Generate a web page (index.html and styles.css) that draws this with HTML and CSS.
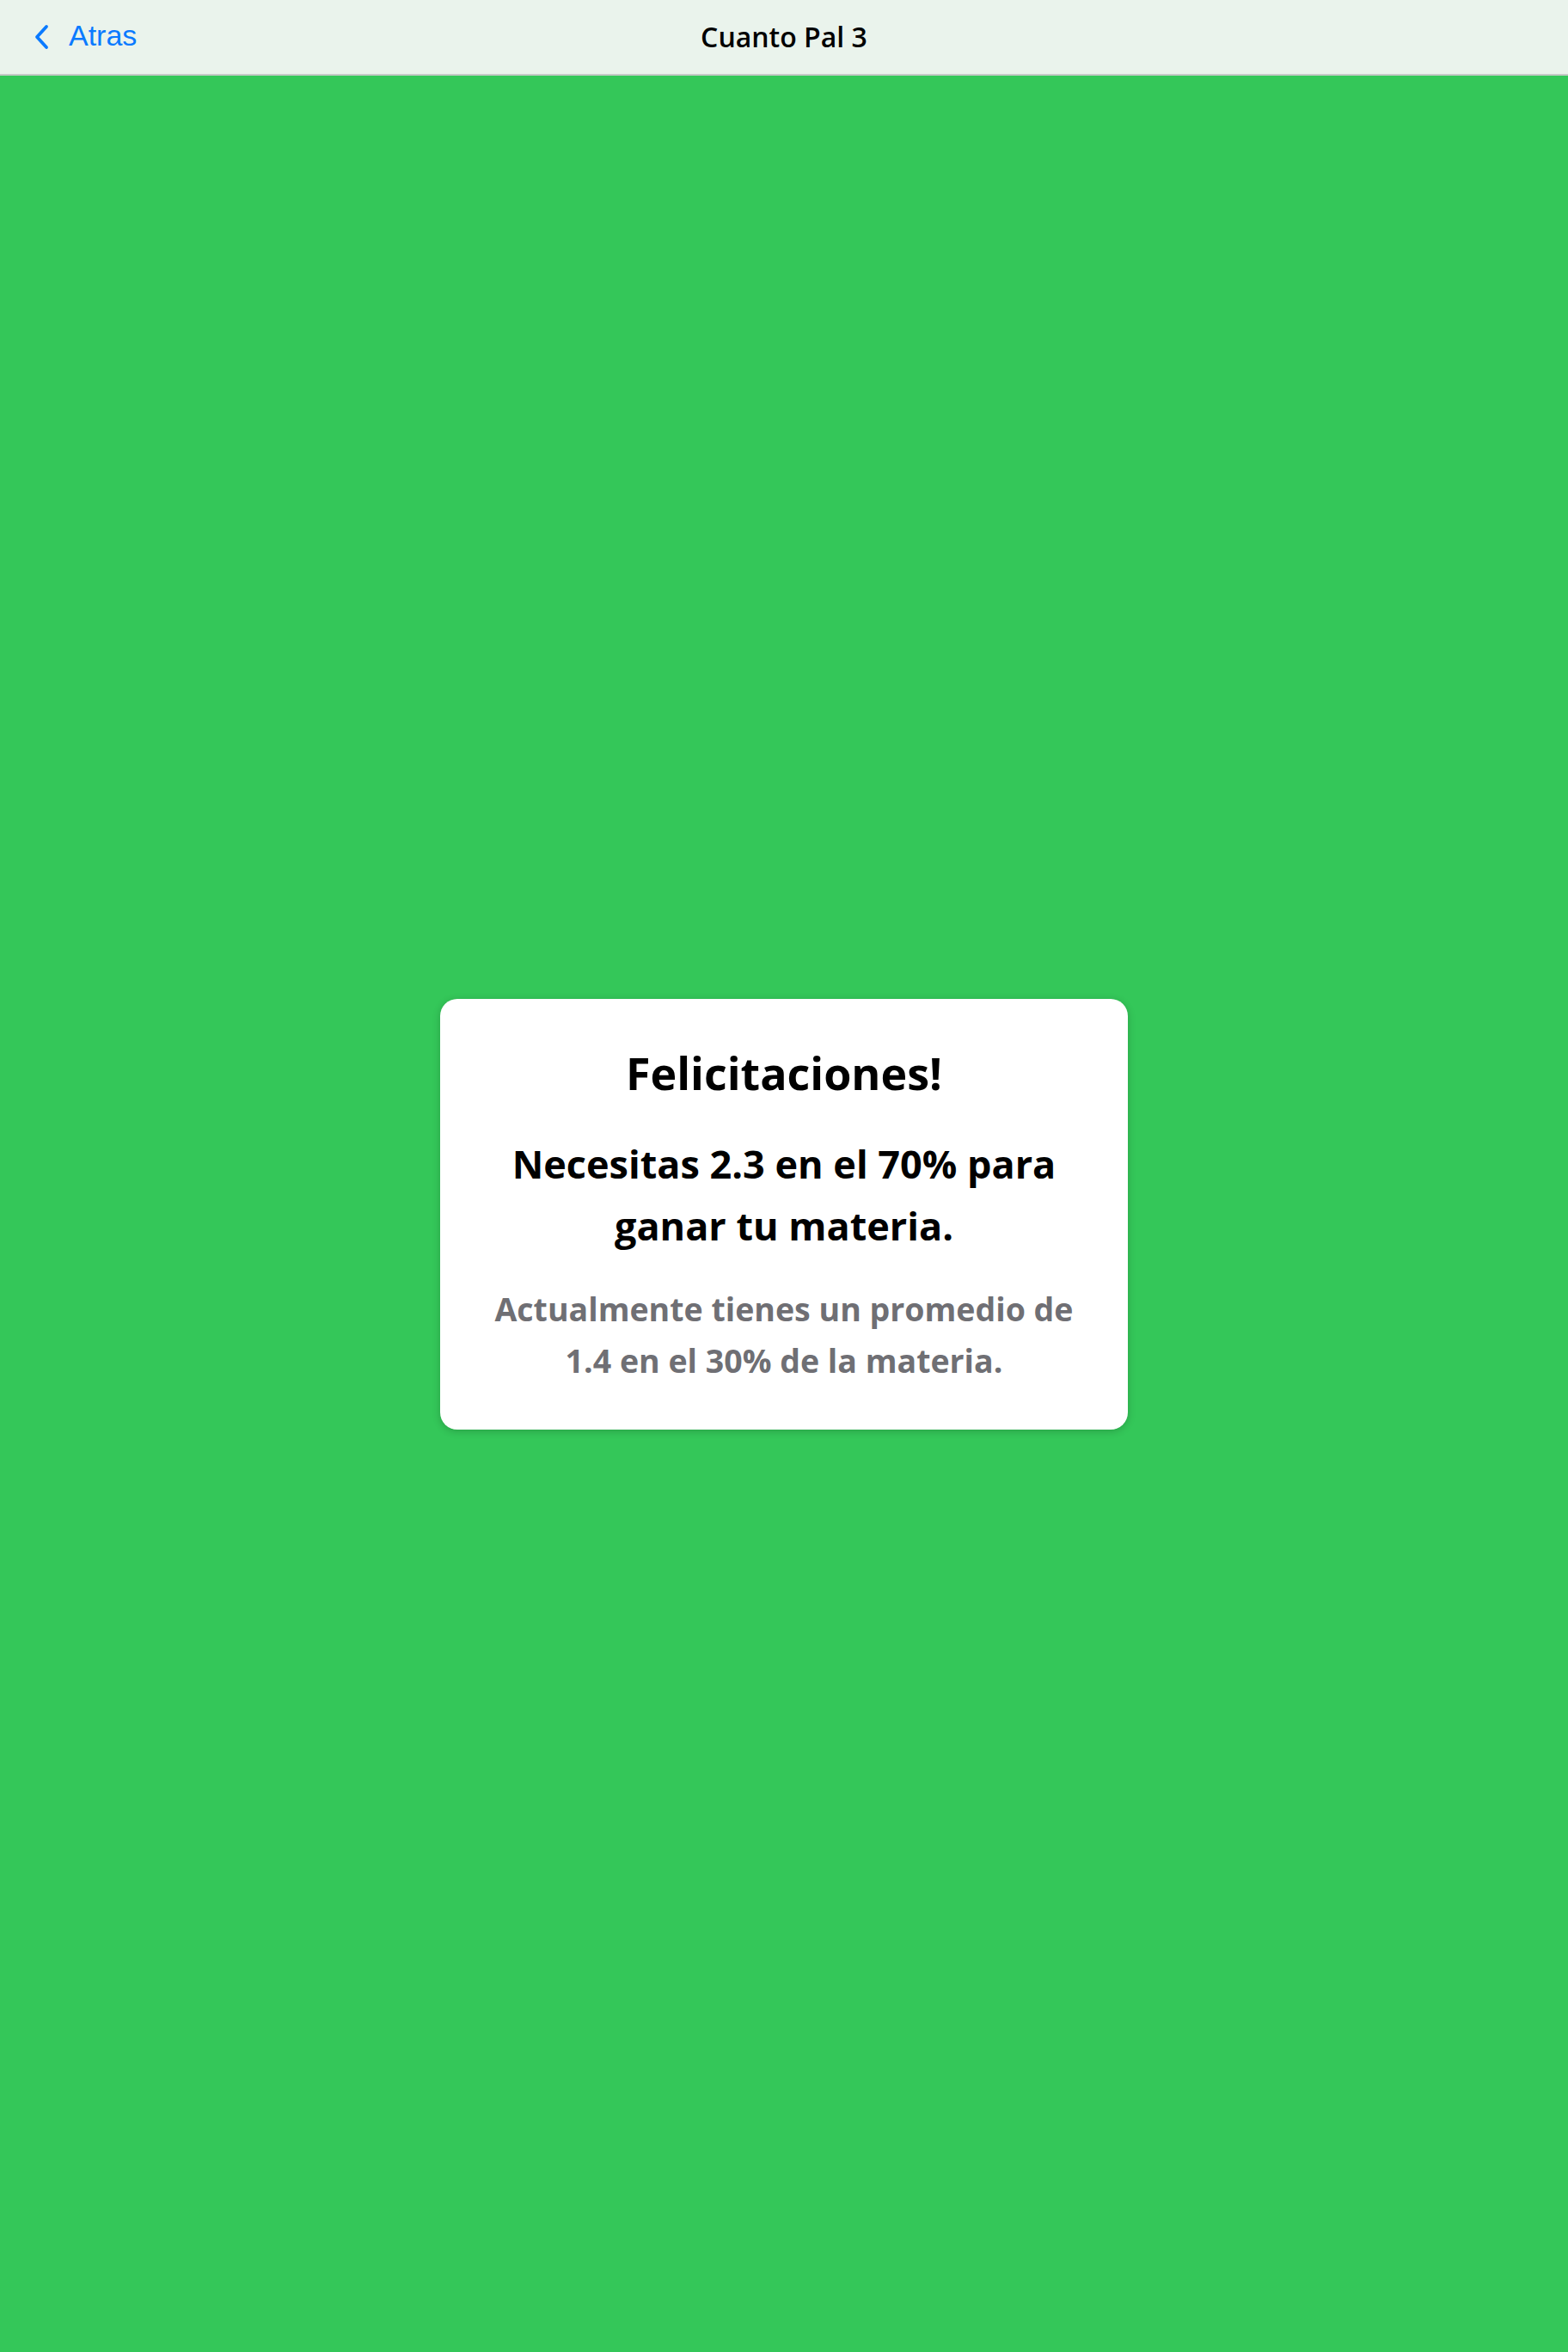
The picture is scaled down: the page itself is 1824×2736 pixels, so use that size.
FILE: index.html
```html
<!DOCTYPE html>
<html lang="es">
<head>
<meta charset="utf-8">
<title>Cuanto Pal 3</title>
<link rel="stylesheet" href="styles.css">
</head>
<body>
<div class="app">
  <header class="navbar">
    <a class="back" href="#">
      <svg class="chevron" viewBox="0 0 20 32" width="20" height="32" aria-hidden="true">
        <path d="M16 4 L5 16 L16 28" fill="none" stroke="#0a7aff" stroke-width="3.8" stroke-linecap="round" stroke-linejoin="round"/>
      </svg>
      <span class="back-label">Atras</span>
    </a>
    <h1 class="nav-title">Cuanto Pal 3</h1>
  </header>
  <main class="screen">
    <section class="card">
      <h2 class="card-title">Felicitaciones!</h2>
      <p class="card-main">Necesitas 2.3 en el 70% para ganar tu materia.</p>
      <p class="card-sub">Actualmente tienes un promedio de 1.4 en el 30% de la materia.</p>
    </section>
  </main>
</div>
</body>
</html>
```
FILE: styles.css
```css
* { box-sizing: border-box; }
html, body { margin: 0; padding: 0; }
body {
  width: 1824px;
  height: 2736px;
  background: #34c759;
  font-family: "Open Sans", "Noto Sans", sans-serif;
}
.app {
  display: flex;
  flex-direction: column;
  height: 2736px;
}
.navbar {
  height: 88px;
  flex: 0 0 88px;
  background: #eaf3ec;
  border-bottom: 2px solid #c6c9c7;
  display: flex;
  align-items: center;
  justify-content: center;
  position: relative;
}
.back {
  position: absolute;
  left: 38px;
  top: 0;
  height: 86px;
  display: flex;
  align-items: center;
  gap: 22px;
  text-decoration: none;
  color: #0a7aff;
}
.chevron { display: block; }
.back-label {
  font-family: "Liberation Sans", Arial, sans-serif;
  font-size: 34px;
  color: #0a7aff;
  margin-top: -4px;
}
.nav-title {
  margin: -2px 0 0;
  font-size: 32px;
  font-weight: 600;
  color: #000;
}
.screen {
  flex: 1;
  display: flex;
  align-items: center;
  justify-content: center;
}
.card {
  width: 800px;
  background: #fff;
  border-radius: 20px;
  box-shadow: 0 2px 10px rgba(0, 0, 0, 0.2);
  padding: 51px 40px 50px;
  text-align: center;
}
.card-title {
  margin: 0;
  font-size: 52px;
  font-weight: 700;
  line-height: 70px;
  color: #000;
}
.card-main {
  margin: 35px 0 0;
  font-size: 45px;
  font-weight: 700;
  line-height: 72px;
  color: #000;
}
.card-sub {
  margin: 31px 0 0;
  font-size: 37.5px;
  font-weight: 700;
  line-height: 60px;
  color: #6f6f74;
}
```
